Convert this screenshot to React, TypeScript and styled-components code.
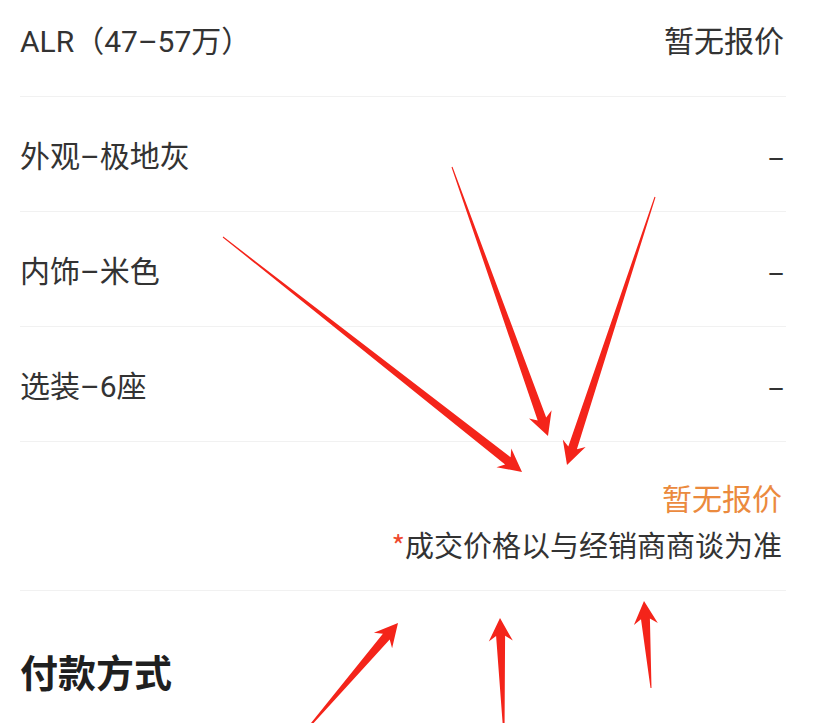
import styled, { createGlobalStyle } from 'styled-components'

const GlobalStyle = createGlobalStyle`
    html, body {
        margin: 0;
        padding: 0;
        background: #ffffff;
    }
    body {
        font-family: "Noto Sans CJK SC", "Noto Sans", sans-serif;
        overflow: hidden;
    }
`

const Page = styled.div`
    position: relative;
    width: 817px;
    height: 723px;
    overflow: hidden;
    background: #fff;
`

const Content = styled.div`
    margin-top: -18px;
    padding: 0 31px 0 20px;
`

const Row = styled.div`
    height: 114px;
    display: flex;
    align-items: center;
    justify-content: space-between;
    border-bottom: 1px solid #f1f1f1;
    font-size: 30px;
    color: #333333;
`

const Label = styled.span`
    font-family: "Roboto", "Noto Sans CJK SC", sans-serif;
`

const Value = styled.span`
    color: #333333;
    padding-right: 2px;
`

const PriceBlock = styled.div`
    display: flex;
    flex-direction: column;
    align-items: flex-end;
    gap: 7px;
    padding: 35px 4px 26px 0;
    border-bottom: 1px solid #f1f1f1;
`

const PriceLine = styled.div<{ $tone?: 'accent' | 'plain' }>`
    font-size: ${props => props.$tone === 'accent' ? '30px' : '29px'};
    line-height: 40px;
    color: ${props => props.$tone === 'accent' ? '#eb8a3e' : '#333333'};
`

const Star = styled.span`
    color: #ef4a2f;
`

const SectionTitle = styled.h2`
    margin: 0;
    padding-top: 56px;
    font-size: 38px;
    line-height: 48px;
    font-weight: 700;
    color: #1f1f1f;
`

const Overlay = styled.svg`
    position: absolute;
    left: 0;
    top: 0;
    pointer-events: none;
`

type Pt = [number, number]

// tapered arrow: thin tail, thick shaft near the head, swept barbs
const arrowPoints = (tail: Pt, tip: Pt) => {
    const dx = tip[0] - tail[0]
    const dy = tip[1] - tail[1]
    const len = Math.hypot(dx, dy)
    const ux = dx / len
    const uy = dy / len
    const nx = -uy
    const ny = ux
    const head = 23
    const barb = 12
    const shaft = 4.5
    const end = 0.5
    const at = (d: number, o: number): string =>
        `${(tip[0] - ux * d + nx * o).toFixed(1)},${(tip[1] - uy * d + ny * o).toFixed(1)}`
    return [
        at(len, end),
        at(head - 5, shaft),
        at(head, barb),
        at(0, 0),
        at(head, -barb),
        at(head - 5, -shaft),
        at(len, -end),
    ].join(' ')
}

const arrows: { tail: Pt; tip: Pt }[] = [
    { tail: [223, 237], tip: [522, 472] },
    { tail: [452, 167], tip: [548, 436] },
    { tail: [655, 197], tip: [567, 465] },
    { tail: [302, 735], tip: [398, 623] },
    { tail: [504, 735], tip: [500, 618] },
    { tail: [651, 688], tip: [644, 601] },
]

const specs = [
    { label: 'ALR（47–57万）', value: '暂无报价' },
    { label: '外观–极地灰', value: '–' },
    { label: '内饰–米色', value: '–' },
    { label: '选装–6座', value: '–' },
]

export default function App() {
    return (
        <Page>
            <GlobalStyle />
            <Content>
                {specs.map(s => (
                    <Row key={s.label}>
                        <Label>{s.label}</Label>
                        <Value>{s.value}</Value>
                    </Row>
                ))}
                <PriceBlock>
                    <PriceLine $tone="accent">暂无报价</PriceLine>
                    <PriceLine><Star>*</Star>成交价格以与经销商商谈为准</PriceLine>
                </PriceBlock>
                <SectionTitle>付款方式</SectionTitle>
            </Content>
            <Overlay width="817" height="723" viewBox="0 0 817 723">
                {arrows.map((a, i) => (
                    <polygon key={i} points={arrowPoints(a.tail, a.tip)} fill="#f4241a" />
                ))}
            </Overlay>
        </Page>
    )
}
